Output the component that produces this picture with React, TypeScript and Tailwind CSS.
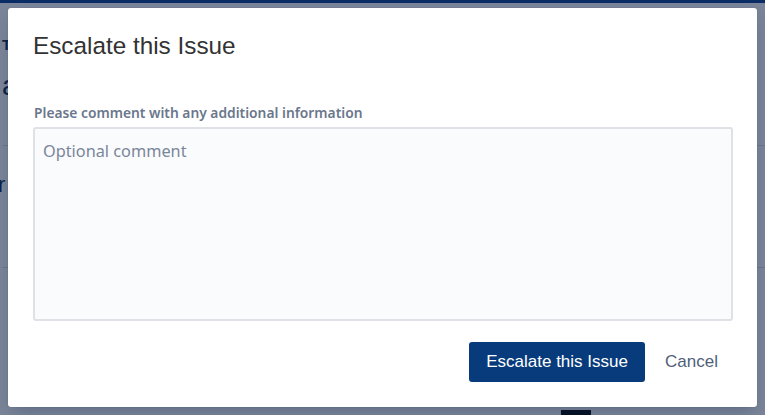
import React from "react";

export default function App() {
    return (
        <div className="relative w-[765px] h-[415px] overflow-hidden bg-white" style={{ fontFamily: "'Liberation Sans', Arial, sans-serif" }}>
            {/* page behind the dialog */}
            <div className="flex flex-col h-full">
                <div className="h-[3px] bg-[#0b3d8c]" />
                <div className="flex flex-col pl-[2px] text-[#172b4d]">
                    <div className="h-[33px]" />
                    <div className="text-[15px] leading-[18px] font-bold">T</div>
                    <div className="h-[17px]" />
                    <div className="text-[28px] leading-[30px]">a</div>
                    <div className="h-[44px]" />
                    <div className="border-t border-[#dfe1e6] h-[27px]" />
                    <div className="text-[22px] leading-[26px] -ml-[4px]">r</div>
                    <div className="h-[69px]" />
                    <div className="border-t border-[#dfe1e6]" />
                </div>
                <div className="flex-1" />
                <div className="flex h-[8px] items-end">
                    <div className="w-[561px]" />
                    <div className="w-[30px] h-[5px] bg-black" />
                </div>
            </div>

            {/* overlay */}
            <div className="absolute inset-0 bg-[rgba(9,30,66,0.54)]" />

            {/* dialog */}
            <div className="absolute left-[8px] top-[8px] w-[749px] h-[399px] bg-white rounded-[3px] shadow-[0_0_1px_rgba(9,30,66,0.31),0_8px_16px_-4px_rgba(9,30,66,0.25)] flex flex-col pl-[25px] pr-[24px] pt-[24px] pb-[25px]">
                <h1 className="text-[24.3px] leading-[28px] text-[#333333]">Escalate this Issue</h1>

                <label className="mt-[45px] mb-[6px] text-[13.8px] leading-[16px] font-semibold text-[#6b778c] pl-[1px]" style={{ fontFamily: "'Noto Sans', sans-serif" }}>
                    Please comment with any additional information
                </label>
                <textarea
                    placeholder="Optional comment"
                    className="h-[194px] w-full resize-none bg-[#fafbfc] border-2 border-[#dfe1e6] rounded-[3px] px-[8px] pt-[12px] pb-[8px] text-[16.3px] leading-[20px] text-[#172b4d] placeholder:text-[#7a869a] outline-none"
                    style={{ fontFamily: "'Noto Sans', sans-serif" }}
                />

                <div className="flex justify-end items-center mt-[21px] pr-[15px]">
                    <button className="h-[40px] w-[176px] rounded-[3px] bg-[#073b7c] text-white text-[17px]">
                        Escalate this Issue
                    </button>
                    <button className="ml-[20px] text-[17px] text-[#505f79]">Cancel</button>
                </div>
            </div>
        </div>
    );
}
